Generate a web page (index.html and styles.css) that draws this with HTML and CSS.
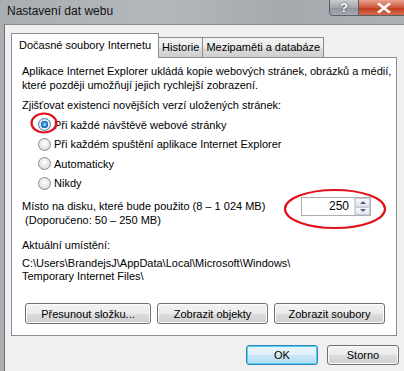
FILE: index.html
```html
<!DOCTYPE html>
<html lang="cs">
<head>
    <meta charset="UTF-8">
    <title>Nastavení dat webu</title>
    <link rel="stylesheet" href="styles.css">
</head>
<body>
    <div class="window">
        <div class="titlebar">
            <span class="title">Nastavení dat webu</span>
            <div class="caption-buttons">
                <span class="cap-btn help">?</span>
                <span class="cap-btn close">
                    <svg width="14" height="10" viewBox="0 0 14 10">
                        <path d="M2 1 L12 9 M12 1 L2 9" stroke="#fff" stroke-width="2.6" stroke-linecap="square"></path>
                        <path d="M2 1 L12 9 M12 1 L2 9" stroke="#fff" stroke-width="1.6"></path>
                    </svg>
                </span>
            </div>
        </div>

        <div class="client">
            <div class="tabs">
                <div class="tab active">Dočasné soubory Internetu</div>
                <div class="tab">Historie</div>
                <div class="tab">Mezipaměti a databáze</div>
            </div>

            <div class="panel">
                <p class="text intro">Aplikace Internet Explorer ukládá kopie webových stránek, obrázků a médií,<br>které později umožňují jejich rychlejší zobrazení.</p>

                <p class="text check-label">Zjišťovat existenci novějších verzí uložených stránek:</p>

                <div class="radios">
                    <label class="radio-row"><span class="radio checked"></span>Při každé návštěvě webové stránky</label>
                    <label class="radio-row"><span class="radio"></span>Při každém spuštění aplikace Internet Explorer</label>
                    <label class="radio-row"><span class="radio"></span>Automaticky</label>
                    <label class="radio-row"><span class="radio"></span>Nikdy</label>
                </div>

                <div class="disk-row">
                    <p class="text">Místo na disku, které bude použito (8 – 1 024 MB)<br>&nbsp;(Doporučeno: 50 – 250 MB)</p>
                    <div class="spinner">
                        <span class="spin-value">250</span>
                        <span class="spin-arrows">
                            <span class="arrow up"></span>
                            <span class="arrow down"></span>
                        </span>
                    </div>
                </div>

                <p class="text location-label">Aktuální umístění:</p>
                <p class="text path">C:\Users\BrandejsJ\AppData\Local\Microsoft\Windows\<br>Temporary Internet Files\</p>

                <div class="panel-buttons">
                    <button class="btn btn-move">Přesunout složku...</button>
                    <button class="btn btn-objects">Zobrazit objekty</button>
                    <button class="btn btn-files">Zobrazit soubory</button>
                </div>
            </div>

            <div class="dialog-buttons">
                <button class="btn btn-ok">OK</button>
                <button class="btn btn-cancel">Storno</button>
            </div>
        </div>

        <!-- červené značky v obrázku -->
        <svg class="mark mark-radio" width="30" height="24" viewBox="0 0 30 24">
            <ellipse cx="15" cy="12" rx="12.5" ry="9.5" fill="none" stroke="#e0121b" stroke-width="2.2"></ellipse>
        </svg>
        <svg class="mark mark-spin" width="106" height="44" viewBox="0 0 106 44">
            <ellipse cx="53" cy="22" rx="50" ry="19" fill="none" stroke="#e0121b" stroke-width="2.2"></ellipse>
        </svg>
    </div>
</body>
</html>
```

FILE: styles.css
```css
body {
    margin: 0;
    padding: 0;
    width: 404px;
    height: 371px;
    overflow: hidden;
    font-family: "Liberation Sans", Arial, sans-serif;
    font-size: 11px;
    color: #000000;
    background-color: #a7acb1;
}

.window {
    position: relative;
    height: 371px;
    display: flex;
    flex-direction: column;
    background: linear-gradient(90deg, #a9aeb3 0%, #b4b8bc 40%, #a5a9ad 70%, #adb1b5 100%);
}

.titlebar {
    height: 24px;
    display: flex;
    align-items: flex-start;
}

.title {
    padding-left: 7px;
    line-height: 23px;
    font-size: 12px;
    color: #111111;
}

.caption-buttons {
    margin-left: auto;
    margin-right: -6px;
    display: flex;
}

.cap-btn {
    height: 16px;
    display: flex;
    justify-content: center;
    align-items: center;
    border: 1px solid #5b5f66;
    border-top: none;
    box-sizing: border-box;
}

.help {
    width: 29px;
    border-radius: 0 0 0 4px;
    border-right: none;
    background: linear-gradient(#c9cdd2, #a2a7ae 50%, #8e949c 51%, #a6abb2);
    color: #ffffff;
    font-weight: bold;
    font-size: 13px;
    text-shadow: 0 0 2px #333333;
}

.close {
    width: 52px;
    background: linear-gradient(#e8a493, #d0553c 50%, #c13a1f 51%, #d86a4b);
}

.client {
    flex: 1;
    margin-left: 4px;
    border-left: 1px solid #6b6f74;
    border-top: 1px solid #8a8e93;
    background-color: #f0f0f0;
    padding: 8px 0 0 6px;
    display: flex;
    flex-direction: column;
}

/* záložky */
.tabs {
    display: flex;
    align-items: flex-end;
    height: 24px;
    position: relative;
    z-index: 1;
}

.tab {
    height: 20px;
    line-height: 19px;
    padding: 0 3px;
    box-sizing: border-box;
    border: 1px solid #898c95;
    border-bottom: none;
    margin-left: -1px;
    background: linear-gradient(#f3f3f3, #ebebeb 50%, #dddddd 51%, #cfcfcf);
    white-space: nowrap;
}

.tab.active {
    height: 25px;
    line-height: 22px;
    margin-left: 0;
    padding: 0 7px;
    background: #ffffff;
    margin-bottom: -1px;
}

.panel {
    width: 386px;
    height: 279px;
    box-sizing: border-box;
    border: 1px solid #898c95;
    background-color: #ffffff;
    padding: 6px 0 0 10px;
}

.text {
    margin: 0;
    line-height: 14px;
    white-space: nowrap;
}

.check-label {
    margin-top: 6px;
}

.radios {
    margin-top: 3px;
    padding-left: 16px;
}

.radio-row {
    display: flex;
    align-items: center;
    height: 19.5px;
}

.radio {
    width: 13px;
    height: 13px;
    box-sizing: border-box;
    border-radius: 50%;
    border: 1px solid #8a8a8a;
    background: radial-gradient(circle at 50% 40%, #ffffff 0%, #e4e4e4 60%, #c9c9c9 100%);
    margin-right: 3px;
    flex-shrink: 0;
}

.radio.checked {
    border-color: #3d7bad;
    background: radial-gradient(circle, #a9e2ff 0%, #2e8ad6 30%, #1a5f9a 45%, #e6eef5 50%, #d8e3ec 100%);
}

.disk-row {
    margin-top: 6px;
    display: flex;
    align-items: flex-start;
}

.spinner {
    margin-left: auto;
    margin-right: 25px;
    margin-top: -2px;
    width: 70px;
    height: 19px;
    box-sizing: border-box;
    border: 1px solid #abadb3;
    display: flex;
    background: #ffffff;
}

.spin-value {
    flex: 1;
    text-align: right;
    line-height: 17px;
    padding-right: 5px;
    font-size: 12px;
}

.spin-arrows {
    width: 15px;
    display: flex;
    flex-direction: column;
    border-left: 1px solid #d5d9e0;
}

.arrow {
    flex: 1;
    display: flex;
    justify-content: center;
    align-items: center;
    background: linear-gradient(#f6f8fb, #e1e6ee);
    border: 1px solid #c6cdd8;
}

.arrow.up::after {
    content: "";
    border-left: 3px solid transparent;
    border-right: 3px solid transparent;
    border-bottom: 3px solid #4d6185;
}

.arrow.down::after {
    content: "";
    border-left: 3px solid transparent;
    border-right: 3px solid transparent;
    border-top: 3px solid #4d6185;
}

.location-label {
    margin-top: 11px;
}

.path {
    margin-top: 5px;
    line-height: 13px;
}

.panel-buttons {
    margin-top: 20px;
    padding-left: 3px;
    display: flex;
    gap: 6px;
}

.btn {
    font-family: "Liberation Sans", Arial, sans-serif;
    font-size: 11px;
    height: 21px;
    padding: 0;
    border: 1px solid #707070;
    border-radius: 3px;
    background: linear-gradient(#f2f2f2, #ebebeb 50%, #dddddd 51%, #cfcfcf);
    color: #000000;
    box-shadow: inset 0 0 0 1px #fcfcfc;
}

.btn-move { width: 126px; }
.btn-objects { width: 111px; }
.btn-files { width: 111px; }

.dialog-buttons {
    margin-top: 9px;
    padding-left: 235px;
    display: flex;
    gap: 9px;
}

.btn-ok {
    width: 72px;
    height: 20px;
    border-color: #3c7fb1;
    box-shadow: inset 0 0 0 1px #48d4fe;
    background: linear-gradient(#e9f5fc, #dff0fa 50%, #c9e6f7 51%, #b6ddf2);
}

.btn-cancel {
    width: 72px;
    height: 20px;
}

.mark {
    position: absolute;
}

.mark-radio {
    left: 29px;
    top: 111px;
}

.mark-spin {
    left: 282px;
    top: 187px;
}
```
